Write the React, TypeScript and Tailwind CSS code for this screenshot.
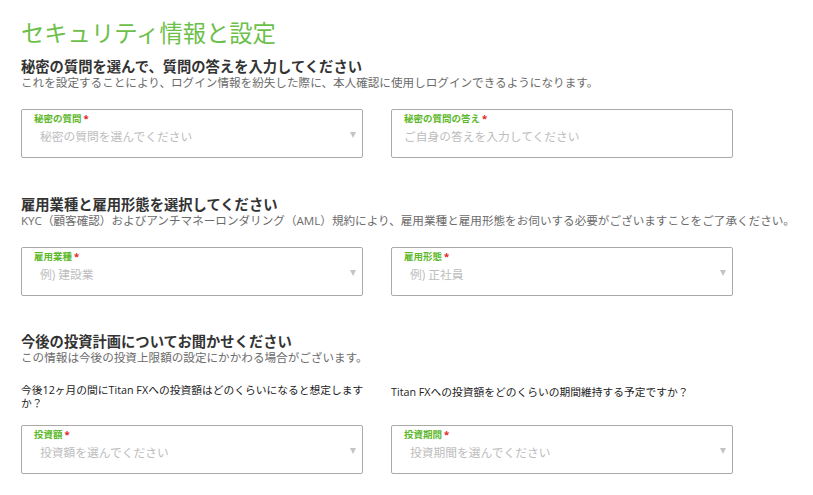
import React from 'react';

const font = { fontFamily: '"Open Sans", "Noto Sans CJK JP", sans-serif' };

function Field({ label, placeholder, select }: { label: string; placeholder: string; select?: boolean }) {
  return (
    <div className="relative h-[49px] rounded-[2px] border border-[#aaaaaa] bg-white pl-[12px] pr-[12px]">
      <div className="pt-[3px] text-[9.5px] font-bold leading-[12px] text-[#5cb82a]">
        {label}
        <span className="ml-[2px] text-[#e2231a]">*</span>
      </div>
      <div className={`mt-[3px] text-[11.75px] leading-[16px] text-[#bdbdbd] ${select ? 'pl-[6px]' : ''}`}>
        {placeholder}
      </div>
      {select && (
        <svg className="absolute right-[6px] top-[22px]" width="6" height="6" viewBox="0 0 6 6">
          <path d="M0 0H6L3 6Z" fill="#c4c4c4" />
        </svg>
      )}
    </div>
  );
}

function SectionHead({ title, desc }: { title: string; desc: string }) {
  return (
    <div>
      <h2 className="text-[14.3px] font-bold leading-[16px] text-[#333333]">{title}</h2>
      <p className="text-[11.6px] leading-[16px] text-[#6b6b6b]">{desc}</p>
    </div>
  );
}

export default function App() {
  return (
    <div className="h-[495px] w-[813px] overflow-hidden bg-white pl-[21px] pt-[17px]" style={font}>
      <h1 className="text-[23.3px] leading-[32px] text-[#6cc04a]">セキュリティ情報と設定</h1>

      {/* Secret question */}
      <div className="mt-[10px]">
        <SectionHead
          title="秘密の質問を選んで、質問の答えを入力してください"
          desc="これを設定することにより、ログイン情報を紛失した際に、本人確認に使用しログインできるようになります。"
        />
        <div className="mt-[18px] grid grid-cols-[342px_342px] gap-x-[28px]">
          <Field label="秘密の質問" placeholder="秘密の質問を選んでください" select />
          <Field label="秘密の質問の答え" placeholder="ご自身の答えを入力してください" />
        </div>
      </div>

      {/* Employment */}
      <div className="mt-[39px]">
        <SectionHead
          title="雇用業種と雇用形態を選択してください"
          desc="KYC（顧客確認）およびアンチマネーロンダリング（AML）規約により、雇用業種と雇用形態をお伺いする必要がございますことをご了承ください。"
        />
        <div className="mt-[18px] grid grid-cols-[342px_342px] gap-x-[28px]">
          <Field label="雇用業種" placeholder="例) 建設業" select />
          <Field label="雇用形態" placeholder="例) 正社員" select />
        </div>
      </div>

      {/* Investment plan */}
      <div className="mt-[38px]">
        <SectionHead
          title="今後の投資計画についてお聞かせください"
          desc="この情報は今後の投資上限額の設定にかかわる場合がございます。"
        />
        <div className="mt-[18px] grid grid-cols-[342px_342px] gap-x-[28px]">
          <p className="whitespace-nowrap text-[10.75px] leading-[13px] text-[#222222]">
            今後12ヶ月の間にTitan FXへの投資額はどのくらいになると想定します
            <br />
            か？
          </p>
          <p className="pt-[2px] text-[10.75px] leading-[13px] text-[#222222]">
            Titan FXへの投資額をどのくらいの期間維持する予定ですか？
          </p>
        </div>
        <div className="mt-[15px] grid grid-cols-[342px_342px] gap-x-[28px]">
          <Field label="投資額" placeholder="投資額を選んでください" select />
          <Field label="投資期間" placeholder="投資期間を選んでください" select />
        </div>
      </div>
    </div>
  );
}
